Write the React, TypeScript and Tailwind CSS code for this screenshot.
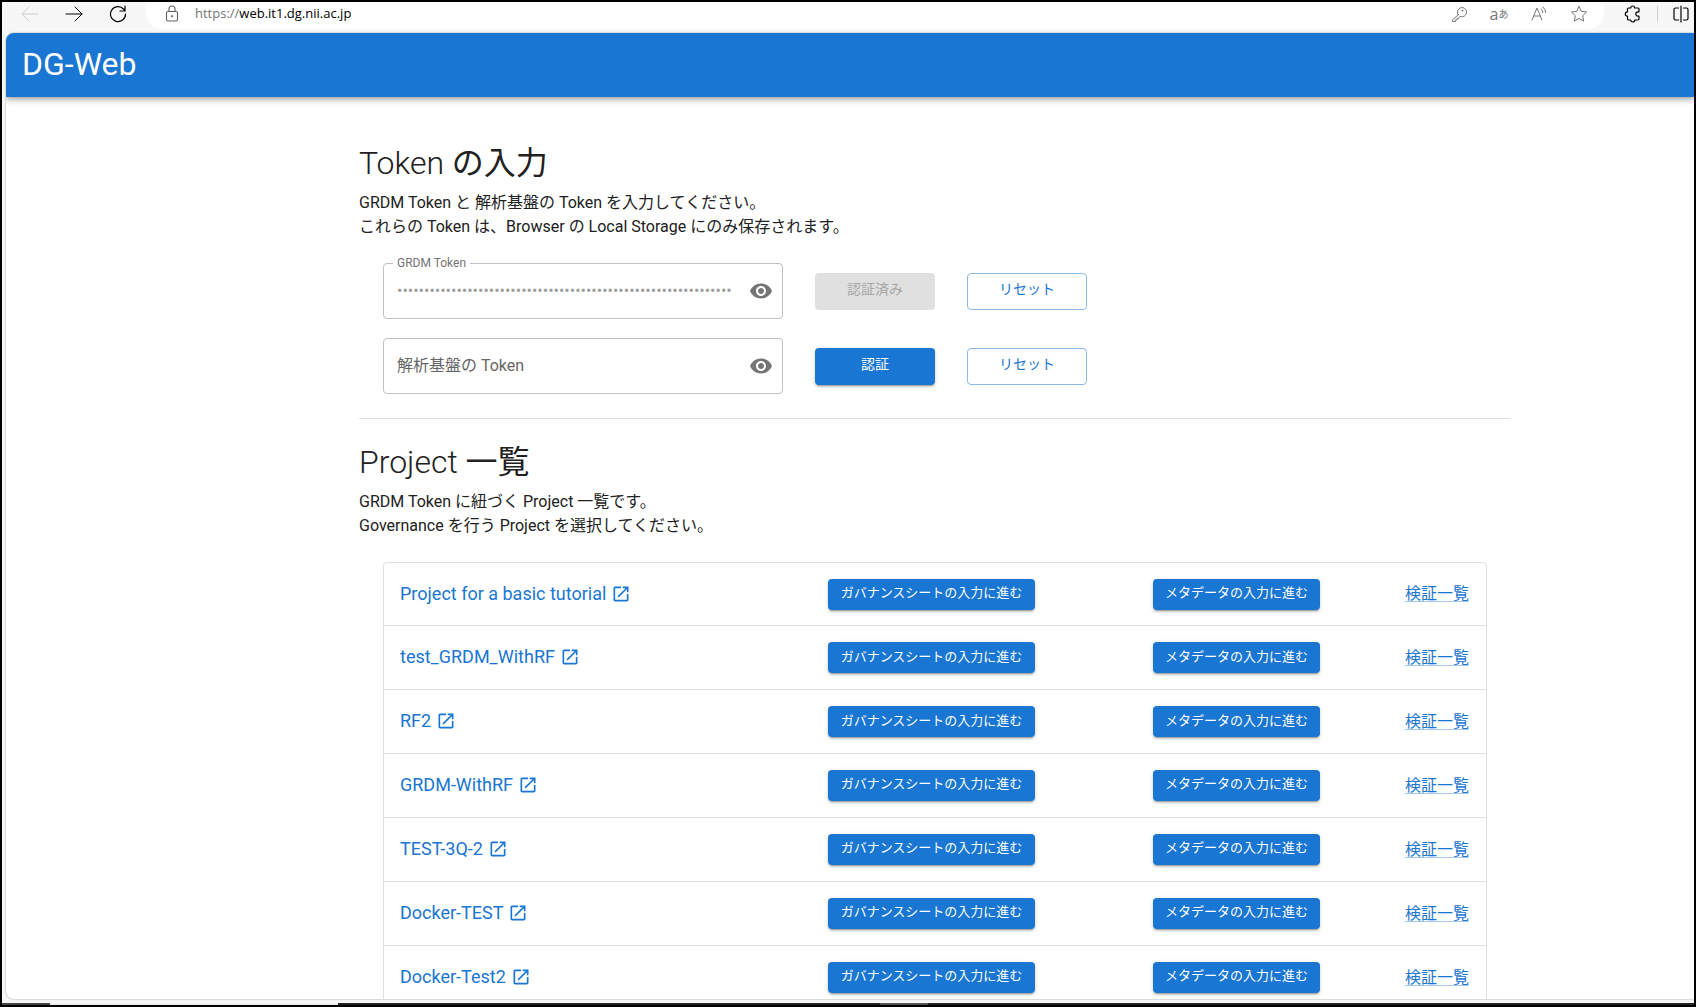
import { useState } from "react";
import type { ReactNode } from "react";

const projects = [
  "Project for a basic tutorial",
  "test_GRDM_WithRF",
  "RF2",
  "GRDM-WithRF",
  "TEST-3Q-2",
  "Docker-TEST",
  "Docker-Test2",
];

function LineIcon({ children, className = "" }: { children: ReactNode; className?: string }) {
  return (
    <svg
      viewBox="0 0 18 18"
      fill="none"
      stroke="currentColor"
      strokeLinecap="round"
      strokeLinejoin="round"
      className={`size-[18px] ${className}`}
      aria-hidden="true"
    >
      {children}
    </svg>
  );
}

function BrowserBar() {
  return (
    <div className="flex h-[31px] items-start bg-[#f7f7f7] pl-[19px]">
      <div className="flex h-6 w-[125px] shrink-0 items-center gap-[26px]">
        <button aria-label="Back" className="text-[#cccccc]">
          <LineIcon>
            <path d="M17 9H1M8 2L1 9l7 7" />
          </LineIcon>
        </button>
        <button aria-label="Forward" className="text-black">
          <LineIcon>
            <path d="M1 9h16M10 2l7 7-7 7" />
          </LineIcon>
        </button>
        <button aria-label="Reload" className="text-black">
          <LineIcon>
            <path d="M16.5 9A7.5 7.5 0 1 1 14.5 4L16 5.6M16 1v5h-5" strokeWidth="1.2" />
          </LineIcon>
        </button>
      </div>
      <div className="flex h-[27px] min-w-0 flex-1 items-start rounded-b-2xl bg-white pr-4 pl-[17px]">
        <div className="flex h-6 flex-1 items-center gap-[14px]">
          <LineIcon className="text-[#5f5f5f]">
            <rect x="3.5" y="6.5" width="11" height="9.5" rx="1.5" strokeWidth="1.1" />
            <path d="M6 6.5V4a3 3 0 0 1 6 0v2.5" strokeWidth="1.1" />
            <circle cx="9" cy="11.2" r=".6" fill="currentColor" />
          </LineIcon>
          <span className="font-['Open_Sans',sans-serif] text-[13px] text-black">
            <span className="text-[#767676]">https://</span>web.it1.dg.nii.ac.jp
          </span>
        </div>
        <div className="flex h-6 items-center gap-[22px] text-[#767676]">
          <button aria-label="Saved passwords">
            <LineIcon>
              <path d="M8.2 9.8L2.500 15v1.500h2.800V15H7v-1.700h1.700l1.500-1.900a4.600 4.600 0 1 0-2-1.600z" />
              <circle cx="12.3" cy="5.7" r=".5" />
            </LineIcon>
          </button>
          <button
            aria-label="Translate"
            className="flex w-[18px] items-center justify-center font-['Open_Sans','Noto_Sans_CJK_JP',sans-serif] text-base leading-none"
          >
            a<span className="text-[10px]">あ</span>
          </button>
          <button aria-label="Read aloud">
            <LineIcon>
              <path d="M2 15L7 3l5 12M3.6 11h6.8M11 4a4 4 0 0 1 1.700 3.500M13 2a7 7 0 0 1 2.700 5.500" />
            </LineIcon>
          </button>
          <button aria-label="Add to favorites">
            <LineIcon>
              <path d="M9 1.5l2.3 4.8 5.2.7-3.8 3.7.9 5.3L9 13.5 4.4 16l.9-5.3L1.5 7l5.2-.7z" />
            </LineIcon>
          </button>
        </div>
      </div>
      <div className="flex h-6 shrink-0 items-center pr-1 pl-[20px] text-black">
        <button aria-label="Extensions">
          <LineIcon>
            <path
              d="M4.500 3H6.700a2 2 0 0 1 4 0H14a1 1 0 0 1 1 1v2.800h-1a2.200 2.200 0 0 0 0 4.400h1V14a1 1 0 0 1-1 1h-3.300a2 2 0 0 1-4 0H4.500a1 1 0 0 1-1-1v-2.800a2.200 2.200 0 0 1 0-4.400V4a1 1 0 0 1 1-1z"
              strokeWidth="1.2"
            />
          </LineIcon>
        </button>
        <span className="mr-[14px] ml-[15px] h-4 w-px bg-[#cfcfcf]" />
        <button aria-label="Split screen">
          <LineIcon>
            <path
              d="M6.5 3h-3A1.500 1.500 0 0 0 2 4.500v9A1.500 1.500 0 0 0 3.500 15h3M11.500 3h3A1.500 1.500 0 0 1 16 4.500v9a1.500 1.500 0 0 1-1.500 1.500h-3M9 1v16"
              strokeWidth="1.2"
            />
          </LineIcon>
        </button>
      </div>
    </div>
  );
}

function EyeIcon() {
  return (
    <svg viewBox="0 0 24 24" className="size-6 fill-[#757575]" aria-hidden="true">
      <path d="M12 4.500C7 4.500 2.730 7.610 1 12c1.730 4.390 6 7.500 11 7.500s9.270-3.110 11-7.500c-1.730-4.390-6-7.500-11-7.500M12 17c-2.760 0-5-2.240-5-5s2.240-5 5-5 5 2.240 5 5-2.240 5-5 5m0-8c-1.660 0-3 1.340-3 3s1.340 3 3 3 3-1.340 3-3-1.340-3-3-3" />
    </svg>
  );
}

function OpenInNewIcon() {
  return (
    <svg viewBox="0 0 24 24" className="size-5 fill-[#1976d2]" aria-hidden="true">
      <path d="M19 19H5V5h7V3H5c-1.110 0-2 .9-2 2v14c0 1.100.89 2 2 2h14c1.100 0 2-.9 2-2v-7h-2zM14 3v2h3.590l-9.830 9.830 1.410 1.410L19 6.410V10h2V3z" />
    </svg>
  );
}

const filled =
  "rounded bg-[#1976d2] text-white shadow-[0_3px_1px_-2px_rgba(0,0,0,0.2),0_2px_2px_0_rgba(0,0,0,0.14),0_1px_5px_0_rgba(0,0,0,0.12)]";

function TokenRow({ id, label, initial, verified }: { id: string; label: string; initial: string; verified: boolean }) {
  const [value, setValue] = useState(initial);
  const [shown, setShown] = useState(false);
  return (
    <div className="flex items-center gap-8">
      <div className="relative flex h-14 w-[400px] items-center rounded border border-[#c0c0c0] pr-[9px] pl-[13px]">
        <label
          htmlFor={id}
          className={
            verified
              ? "absolute -top-[9px] left-[9px] bg-white px-1 text-xs leading-4 text-[#757575]"
              : "pointer-events-none absolute top-[15px] left-[13px] text-base leading-6 text-[#666666]"
          }
        >
          {label}
        </label>
        <input
          id={id}
          type={shown ? "text" : "password"}
          value={value}
          disabled={verified}
          onChange={(e) => setValue(e.target.value)}
          className="min-w-0 flex-1 bg-transparent text-base text-[#9e9e9e] outline-none"
        />
        <button
          type="button"
          aria-label="Toggle visibility"
          onClick={() => setShown(!shown)}
          className="ml-2 flex size-6 items-center justify-center"
        >
          <EyeIcon />
        </button>
      </div>
      <button
        type="button"
        disabled={verified}
        className={
          verified
            ? "h-[37px] w-[120px] rounded bg-[#e0e0e0] pb-1 text-sm text-[#a6a6a6]"
            : `h-[37px] w-[120px] pb-1 text-sm ${filled}`
        }
      >
        {verified ? "認証済み" : "認証"}
      </button>
      <button
        type="button"
        className="h-[37px] w-[120px] rounded border border-[#8cbae8] pb-1 text-sm text-[#1976d2]"
      >
        リセット
      </button>
    </div>
  );
}

function SectionTitle({ latin, japanese }: { latin: string; japanese: string }) {
  return (
    <h2 className="mb-[7px] text-[32px] leading-[42px] font-light">
      {latin} <span className="font-normal">{japanese}</span>
    </h2>
  );
}

export default function App() {
  return (
    <div className="flex h-screen flex-col overflow-hidden border-2 border-black bg-[#f7f7f7] font-['Roboto','Noto_Sans_CJK_JP',sans-serif] text-[#212121]">
      <BrowserBar />
      <div className="ml-1 flex min-h-0 flex-1 flex-col overflow-hidden rounded-l-lg bg-white shadow-[0_0_2px_rgba(0,0,0,0.4)]">
        <header className="flex h-16 shrink-0 items-center bg-[#1976d2] px-4 pb-0.5 shadow-[0_2px_4px_-1px_rgba(0,0,0,0.2),0_4px_5px_0_rgba(0,0,0,0.14),0_1px_10px_0_rgba(0,0,0,0.12)]">
          <h1 className="text-[32px] leading-10 text-white">DG-Web</h1>
        </header>
        <main className="min-h-0 flex-1 overflow-hidden pt-[45px] pr-[183px] pl-[353px]">
          <section className="border-b border-[#e0e0e0] pb-6">
            <SectionTitle latin="Token" japanese="の入力" />
            <p className="text-base leading-6">
              GRDM Token と 解析基盤の Token を入力してください。
              <br />
              これらの Token は、Browser の Local Storage にのみ保存されます。
            </p>
            <form className="mt-6 ml-6 flex flex-col gap-[19px]" onSubmit={(e) => e.preventDefault()}>
              <TokenRow id="grdm-token" label="GRDM Token" initial={"x".repeat(62)} verified />
              <TokenRow id="platform-token" label="解析基盤の Token" initial="" verified={false} />
            </form>
          </section>
          <section className="pt-[22px]">
            <SectionTitle latin="Project" japanese="一覧" />
            <p className="text-base leading-6">
              GRDM Token に紐づく Project 一覧です。
              <br />
              Governance を行う Project を選択してください。
            </p>
            <div className="mx-6 mt-6 rounded border border-[#e0e0e0]">
              <table className="h-[447px] w-full table-fixed border-collapse">
                <colgroup>
                  <col />
                  <col className="w-[325px]" />
                  <col className="w-[252px]" />
                  <col className="w-[81px]" />
                </colgroup>
                <tbody>
                  {projects.map((name) => (
                    <tr key={name} className="border-b border-[#e0e0e0]">
                      <td className="pl-4">
                        <a href="#project" className="inline-flex items-center gap-[5px] text-lg leading-6 text-[#1976d2]">
                          {name}
                          <OpenInNewIcon />
                        </a>
                      </td>
                      <td>
                        <button type="button" className={`flex h-[31px] w-[207px] items-center justify-center pb-[3px] text-[13px] ${filled}`}>
                          ガバナンスシートの入力に進む
                        </button>
                      </td>
                      <td>
                        <button type="button" className={`flex h-[31px] w-[167px] items-center justify-center pb-[3px] text-[13px] ${filled}`}>
                          メタデータの入力に進む
                        </button>
                      </td>
                      <td className="text-base leading-6">
                        <a href="#verify" className="text-[#1976d2] underline decoration-[#a3c8ed] underline-offset-2">
                          検証一覧
                        </a>
                      </td>
                    </tr>
                  ))}
                </tbody>
              </table>
            </div>
          </section>
        </main>
      </div>
      <div className="mt-1 flex h-[2px] shrink-0 bg-[#222222]">
        <span className="w-12 bg-[#444444]" />
        <span className="w-[288px] bg-[#eeeeee]" />
        <span className="ml-auto mr-[766px] w-12 bg-[#555555]" />
      </div>
    </div>
  );
}
